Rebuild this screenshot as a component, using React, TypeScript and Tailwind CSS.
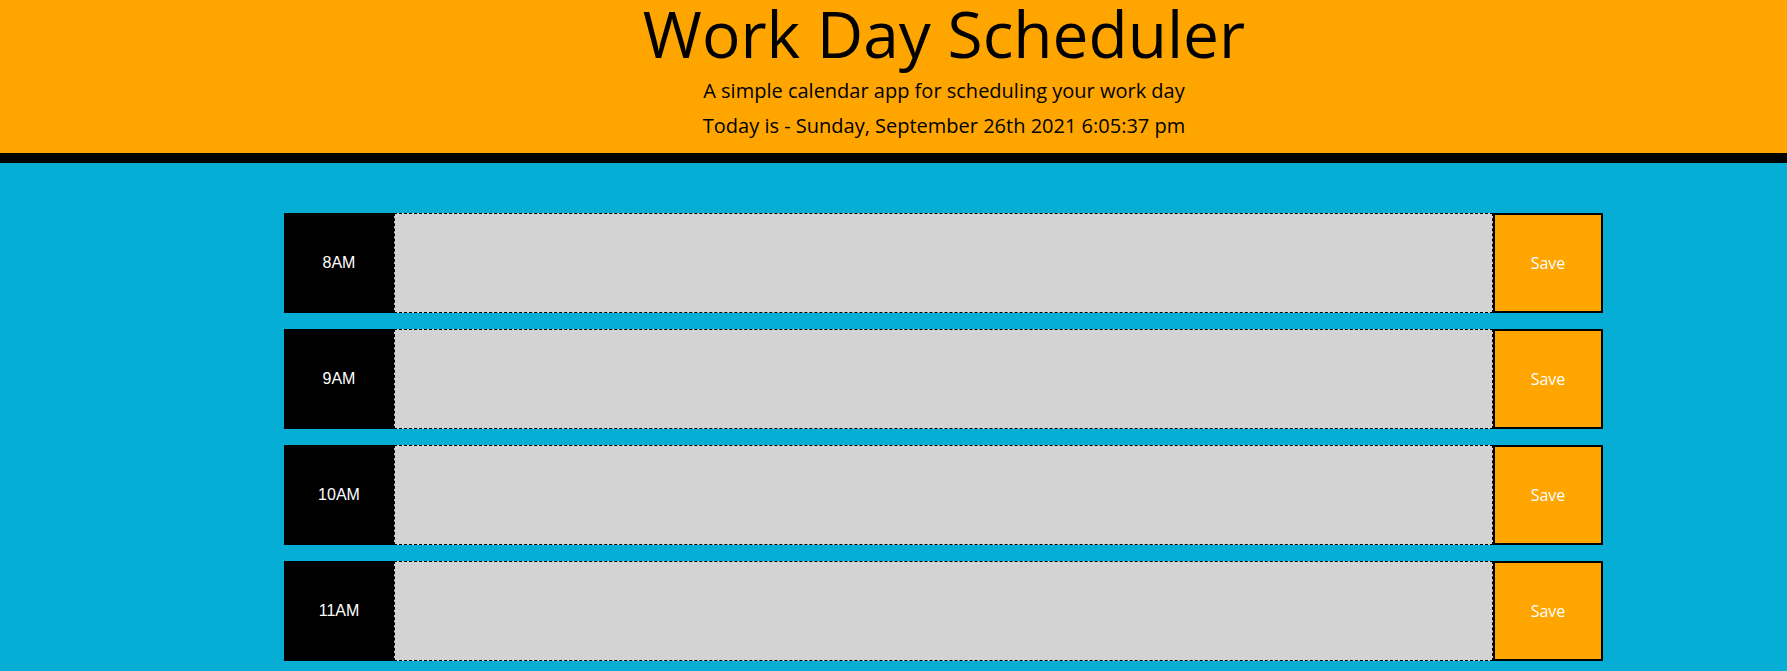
import React from "react";

const hours = ["8AM", "9AM", "10AM", "11AM"];

export default function App() {
  return (
    <div className="min-h-screen bg-[#06aed5]" style={{ fontFamily: '"Open Sans", sans-serif' }}>
      <header className="bg-[#ffa500] border-b-[10px] border-black text-center text-black pl-[101px] pt-[2px] pb-[10px]">
        <h1 className="text-[64px] leading-[64px] font-normal m-0" style={{ fontFamily: '"Open Sans", sans-serif' }}>
          Work Day Scheduler
        </h1>
        <div className="mt-[7px] text-[20px] leading-[35px]">
          <p>A simple calendar app for scheduling your work day</p>
          <p>Today is - Sunday, September 26th 2021 6:05:37 pm</p>
        </div>
      </header>
      <main className="pt-[50px] pb-10">
        <div className="ml-[284px] w-[1319px] flex flex-col gap-4">
          {hours.map((h) => (
            <div key={h} className="flex h-[100px]">
              <div
                className="w-[110px] bg-black text-white text-[16px] flex items-center justify-center"
                style={{ fontFamily: '"Liberation Sans", Arial, sans-serif' }}
              >
                {h}
              </div>
              <textarea className="flex-1 bg-[#d3d3d3] border border-dashed border-black resize-none outline-none p-2" />
              <button className="w-[110px] bg-[#ffa500] border-2 border-black text-white text-[16px] flex items-center justify-center">
                Save
              </button>
            </div>
          ))}
        </div>
      </main>
    </div>
  );
}
